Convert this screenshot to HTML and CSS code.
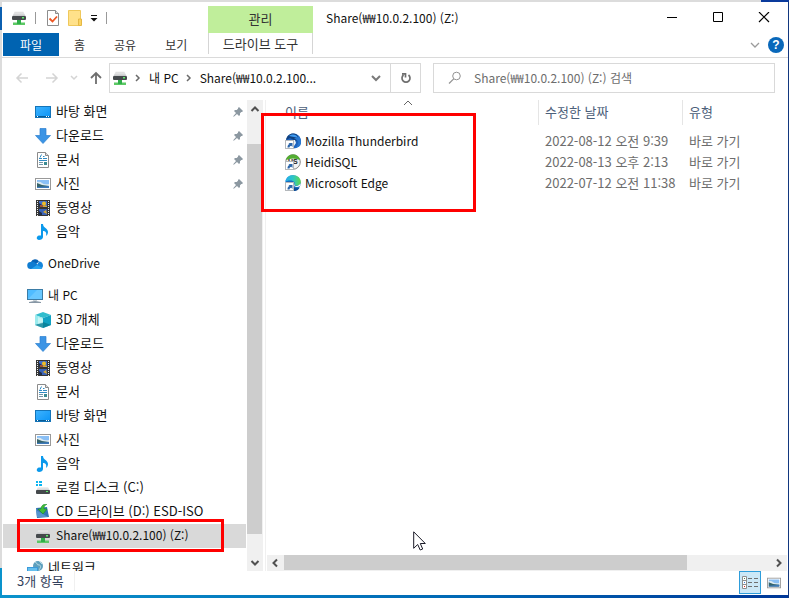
FILE: index.html
```html
<!DOCTYPE html>
<html lang="ko">
<head>
<meta charset="utf-8">
<title>Share(₩₩10.0.2.100) (Z:)</title>
<link rel="stylesheet" href="styles.css">
</head>
<body>
<svg class="sprite" aria-hidden="true">
  <defs>
    <linearGradient id="g-desk" x1="0" y1="0" x2="1" y2="1"><stop offset="0" stop-color="#3fb4ff"/><stop offset="1" stop-color="#0a93f5"/></linearGradient>
    <linearGradient id="g-drive" x1="0" y1="0" x2="0" y2="1"><stop offset="0" stop-color="#f2f2f2"/><stop offset="1" stop-color="#c4c6c8"/></linearGradient>
    <linearGradient id="g-edge" x1="0" y1="0" x2="1" y2="0"><stop offset="0" stop-color="#27a9ee"/><stop offset=".5" stop-color="#2cc6c4"/><stop offset="1" stop-color="#62d94b"/></linearGradient>
    <symbol id="netdrive" viewBox="0 0 16 16">
      <path d="M3.500 2h9l2 4h-13z" fill="url(#g-drive)"/>
      <path d="M3.500 2.200h9" stroke="#c9c9c9" stroke-width=".5"/>
      <rect x="1" y="6" width="14" height="4" rx="1" fill="#45494c"/>
      <rect x="11" y="7" width="2" height="1.500" fill="#5df06a"/>
      <path d="M6 10h4v2.500h4V15H2v-2.500h4z" fill="#5cc865"/>
      <path d="M6 10h4v4H6z" fill="#2fae49"/>
    </symbol>
    <symbol id="desktop" viewBox="0 0 16 16">
      <rect x=".5" y="2.500" width="15" height="11" fill="url(#g-desk)" stroke="#1474b8"/>
      <path d="M1 12h14v1H1z" fill="#075b96"/><path d="M2 12h1v1H2zM11 12h1v1h-1zM13 12h1v1h-1z" fill="#fff"/>
    </symbol>
    <symbol id="download" viewBox="0 0 16 16"><path d="M5 .5h6v7h4.500L8 15.500.5 7.500H5z" fill="#3b94e5" stroke="#2d7fd0" stroke-width=".7"/></symbol>
    <symbol id="document" viewBox="0 0 16 16">
      <path d="M2.500.5h8l3 3v12h-11z" fill="#fff" stroke="#8b8b8b"/><path d="M10.500.5v3h3" fill="#ddd" stroke="#8b8b8b"/>
      <path d="M5 5.500l1.500-3M4 6.500h3M8 4.500h1.500M4 8.500h8M8 6.500h4" stroke="#318bc3"/>
      <path d="M4 10.500h4M4 12.500h4" stroke="#7396a9"/><rect x="9" y="10" width="3" height="3" fill="#3c8b91"/>
    </symbol>
    <symbol id="picture" viewBox="0 0 16 16">
      <rect x=".5" y="2.500" width="15" height="11" fill="#fff" stroke="#999"/>
      <rect x="2" y="4" width="12" height="8" fill="#8abff5"/><path d="M2 6q3-1 5 1t7 1v2H2z" fill="#dceaf1"/><path d="M2 7l5 2 7 1v2H2z" fill="#35636b"/><path d="M2 11l12-1v2H2z" fill="#3d79ba"/>
    </symbol>
    <symbol id="video" viewBox="0 0 16 16">
      <rect x="1" y="0" width="14" height="16" fill="#353535"/>
      <path d="M2.500 1v15M13.500 1v15" stroke="#eee" stroke-dasharray="1 1"/>
      <rect x="4" y="1" width="8" height="6" fill="#426dc7"/><rect x="4" y="9" width="8" height="6" fill="#3a63b8"/>
      <path d="M4 3l3 2v2H4zM4 11l3 2v2H4z" fill="#1f2e4c"/><circle cx="9" cy="3.500" r="2" fill="#efbd24"/><path d="M7 7l2-2 3 1v1zM8 12l3-2 1 4z" fill="#d7a832"/><path d="M5 5h3v2H5z" fill="#9f5139"/>
    </symbol>
    <symbol id="music" viewBox="0 0 16 16"><path d="M6 0h2c0 4 5 4 5 8 0 2-1 3-2 4 1-4-1-5-3-5v6c0 2-2 3-4 3-3 0-3-4 0-4.500q1-.2 2 0z" fill="#0b99ec"/></symbol>
    <symbol id="cloud" viewBox="0 0 16 16">
      <path d="M4 6a4.500 4.500 0 0 1 8-.5L8 9z" fill="#0862b4"/><path d="M4 13a3.500 3.500 0 0 1-.5-7c2-.5 4 0 5 1L15 12q-1 1-2 1z" fill="#0f7cd1"/><path d="M5 13l5-4 2-3.500c3 0 4 2.500 4 4s-1 3.500-3 3.500z" fill="#1686dc"/><path d="M4 13l6-4 5.500 3q-1 1-2.500 1z" fill="#2aa4ed"/>
    </symbol>
    <symbol id="pc" viewBox="0 0 16 16">
      <rect x=".5" y="1.500" width="15" height="10" fill="#4fbcff" stroke="#3b7ca6"/><path d="M1 11L10 2h5v9z" fill="#7bd0ff" opacity=".6"/><path d="M6 12h4v1H6z" fill="#cad2d6"/><path d="M2 14.500q6-2 12 0z" stroke="#8797a5" fill="#b9c5cf"/>
    </symbol>
    <symbol id="cube" viewBox="0 0 16 16">
      <path d="M8 0l8 3-8 3-8-3z" fill="#31bdcd"/><path d="M0 3l8 3v10l-8-3z" fill="#9aebee"/><path d="M16 3L8 6v10l8-3z" fill="#12a2c3"/><path d="M0 13l8-3 8 3-8 3z" fill="#087a90" opacity=".75"/><path d="M3 5l5 2v4l-5 1z" fill="#daf9f7" opacity=".7"/>
    </symbol>
    <symbol id="disk" viewBox="0 0 16 16">
      <path d="M1 1h2v2H1zM4 1h3v2H4zM1 4h2v2H1zM4 4h3v2H4z" fill="#0ab5f1"/>
      <path d="M3 7h10l2 4H1z" fill="url(#g-drive)"/><rect x="1" y="10" width="14" height="4" rx="1" fill="#45494c"/><rect x="11" y="11" width="2" height="1" fill="#5df06a"/>
    </symbol>
    <symbol id="cd" viewBox="0 0 16 16">
      <path d="M1 4l11-1 2 10-12 1z" fill="#3475b5"/><path d="M1 6l12 7H2z" fill="#5795ce"/>
      <path d="M12 0C7 0 6 3 6 5H3l5 5 4-5H9c0-2 0-3 3-5z" fill="#40bd39" stroke="#168c28" stroke-width=".6"/>
    </symbol>
    <symbol id="network" viewBox="0 0 16 16">
      <circle cx="11" cy="6" r="5" fill="#5d9fbd"/><path d="M8 2c3 1 1 3 4 3s1 4 0 5M12 1l3 3" stroke="#b7dbe5" fill="none"/><path d="M0 7h11v7H0z" fill="#3c9ad9"/><path d="M1 8h9v5H1z" fill="#65bfee"/>
    </symbol>
    <symbol id="pin" viewBox="0 0 10 10"><path d="M6 0l4 4-1 1h-.7L7 6.300V8L6 9 4 7 .8 9.800.2 9.200 3 6 1 4l1-1h1.700L5 1.700V1z" fill="#8c98a1"/></symbol>
    <symbol id="shortcut" viewBox="0 0 16 16"><rect x=".5" y="7.500" width="8" height="8" fill="#fff" stroke="#b4b8bc"/><path d="M2.500 14.500c0-2 .5-3 2-3.500L3.500 10H7.500v4l-1.200-1.200c-1 0-1.600.7-1.800 1.700z" fill="#2c66aa"/></symbol>
    <symbol id="thunderbird" viewBox="0 0 16 16">
      <circle cx="8.500" cy="8" r="7.500" fill="#1c62bd"/><path d="M1 7C2 1 8-1 12 2c2 2 1 5-1 6L5 5z" fill="#10417f"/><path d="M4 3c4-3 8-1 9 2l-4-1z" fill="#3e9af1"/><path d="M5 7l5 0 1 3-2 3H5z" fill="#e9f3fb"/><path d="M9 5l4 3c1 3-1 5-3 7 5 0 7-4 6-8l-2-4-2 2z" fill="#2877d0"/>
      <use href="#shortcut"/>
    </symbol>
    <symbol id="heidi" viewBox="0 0 16 16">
      <circle cx="8" cy="8" r="7.300" fill="#f3f3f3" stroke="#888"/><path d="M1 6C2 2 5 .6 8 .6S14 2 15 6q-7-3-14 0z" fill="#53ad32"/><text x="3" y="10" class="monogram">HS</text>
      <use href="#shortcut"/>
    </symbol>
    <symbol id="edge" viewBox="0 0 16 16">
      <circle cx="8" cy="8" r="7.700" fill="#156bc0"/><path d="M.3 7C1 2 4 .2 8 .2c5 0 8 3.300 7.800 7C15.500 11 11 11.500 9.500 10c1-2-.5-4.500-4-4.500C3 5.500 1 6 .3 7z" fill="url(#g-edge)"/><path d="M6 7c-1 4 2 7 8 6l1-1c-2 5-8 5-11 1-1-3 0-5 2-6z" fill="#0b4b96"/><path d="M8 7c2 1 1 3 1.500 3.500S13 12 15.500 8.500L15 11q-3 2-6 0-2-2-1-4z" fill="#fff"/>
      <use href="#shortcut"/>
    </symbol>
  </defs>
</svg>

<div class="window">
  <header class="titlebar">
    <div class="title-left">
      <div class="quick">
        <svg class="icon"><use href="#netdrive"/></svg>
        <span class="divider"></span>
        <button class="plain" aria-label="속성"><svg width="14" height="16" viewBox="0 0 14 16"><path d="M1.500.5h8l3 3v12h-11z" fill="#fff" stroke="#8d8d8d"/><path d="M9.500.5v3h3" fill="#ddd" stroke="#8d8d8d"/><path d="M3.500 8.500l3 3 4.500-5" fill="none" stroke="#ee5623" stroke-width="1.800"/></svg></button>
        <button class="plain" aria-label="새 폴더"><svg width="14" height="16" viewBox="0 0 14 16"><path d="M.5.5h12v15H.5z" fill="#ffe18a" stroke="#efc85b"/><path d="M10.500 9h3v6.500h-3z" fill="#fbd462" stroke="#e5b846"/></svg></button>
        <button class="plain" aria-label="사용자 지정"><svg width="8" height="8" viewBox="0 0 8 8"><path d="M1 1h6v1H1zM.5 4h7L4 7.500z" fill="#111"/></svg></button>
        <span class="divider"></span>
      </div>
      <nav class="tabs">
        <button class="tab file">파일</button><button class="tab">홈</button><button class="tab">공유</button><button class="tab">보기</button>
      </nav>
    </div>
    <div class="context">
      <div class="context-name">관리</div>
      <button class="context-tab">드라이브 도구</button>
    </div>
    <div class="title-right">
      <div class="caption">
        <h1>Share(₩₩10.0.2.100) (Z:)</h1>
        <button class="control" aria-label="최소화"><svg width="12" height="12" viewBox="0 0 12 12"><path d="M1 5.500h10" stroke="#000"/></svg></button>
        <button class="control" aria-label="최대화"><svg width="12" height="12" viewBox="0 0 12 12"><path d="M1.500.5h9v9h-9z" fill="none" stroke="#000"/></svg></button>
        <button class="control" aria-label="닫기"><svg width="12" height="12" viewBox="0 0 12 12"><path d="M1 0l10 10M11 0L1 10" stroke="#000" stroke-width="1.200"/></svg></button>
      </div>
      <div class="ribbon-end">
        <button class="plain" aria-label="리본 확장"><svg width="10" height="6" viewBox="0 0 10 6"><path d="M1 1l4 4 4-4" fill="none" stroke="#9b9b9b" stroke-width="1.300"/></svg></button>
        <button class="help" aria-label="도움말">?</button>
      </div>
    </div>
  </header>

  <div class="toolbar">
    <div class="history">
      <button class="plain" aria-label="뒤로"><svg width="14" height="12" viewBox="0 0 14 12"><path d="M13 6H2M6.500 1.500L2 6l4.500 4.500" fill="none" stroke="#d4d4d4" stroke-width="1.500"/></svg></button>
      <button class="plain forward" aria-label="앞으로"><svg width="14" height="12" viewBox="0 0 14 12"><path d="M1 6h11M7.500 1.500L12 6l-4.500 4.500" fill="none" stroke="#d4d4d4" stroke-width="1.500"/></svg></button>
      <button class="plain recent" aria-label="최근 위치"><svg width="8" height="6" viewBox="0 0 8 6"><path d="M1 1l3 3 3-3" fill="none" stroke="#d4d4d4" stroke-width="1.500"/></svg></button>
      <button class="plain" aria-label="위로"><svg width="12" height="14" viewBox="0 0 12 14"><path d="M6 13V2M1 7l5-5 5 5" fill="none" stroke="#6e6e6e" stroke-width="1.800"/></svg></button>
    </div>
    <div class="address">
      <svg class="icon"><use href="#netdrive"/></svg>
      <svg class="crumb" width="6" height="8" viewBox="0 0 6 8"><path d="M1 1l3 3-3 3" fill="none" stroke="#6b6b6b" stroke-width="1.500"/></svg>
      <a href="#pc">내 PC</a>
      <svg class="crumb" width="6" height="8" viewBox="0 0 6 8"><path d="M1 1l3 3-3 3" fill="none" stroke="#6b6b6b" stroke-width="1.500"/></svg>
      <a href="#share">Share(₩₩10.0.2.100...</a>
      <button class="plain address-drop" aria-label="이전 위치"><svg width="10" height="7" viewBox="0 0 10 7"><path d="M1 1l4 4 4-4" fill="none" stroke="#7a7a7a" stroke-width="2"/></svg></button>
      <button class="refresh" aria-label="새로 고침"><svg width="12" height="12" viewBox="0 0 12 12"><path d="M8.500 3a4 4 0 1 1-5 0M2 1.800h3.500v3.700" fill="none" stroke="#6e6e6e" stroke-width="1.700"/></svg></button>
    </div>
    <label class="search">
      <svg width="14" height="14" viewBox="0 0 14 14"><circle cx="8.500" cy="5" r="3.800" fill="none" stroke="#929292"/><path d="M5.700 7.800L1 12.500" stroke="#929292" stroke-width="1.200"/></svg>
      <input type="text" aria-label="검색" placeholder="Share(₩₩10.0.2.100) (Z:) 검색">
    </label>
  </div>

  <div class="body">
    <aside class="sidebar">
      <ul class="group">
        <li class="child"><svg class="icon"><use href="#desktop"/></svg>바탕 화면<svg class="pin"><use href="#pin"/></svg></li>
        <li class="child"><svg class="icon"><use href="#download"/></svg>다운로드<svg class="pin"><use href="#pin"/></svg></li>
        <li class="child"><svg class="icon"><use href="#document"/></svg>문서<svg class="pin"><use href="#pin"/></svg></li>
        <li class="child"><svg class="icon"><use href="#picture"/></svg>사진<svg class="pin"><use href="#pin"/></svg></li>
        <li class="child"><svg class="icon"><use href="#video"/></svg>동영상</li>
        <li class="child"><svg class="icon"><use href="#music"/></svg>음악</li>
      </ul>
      <ul class="group"><li class="latin"><svg class="icon"><use href="#cloud"/></svg>OneDrive</li></ul>
      <ul class="group">
        <li class="latin"><svg class="icon"><use href="#pc"/></svg>내 PC</li>
        <li class="child"><svg class="icon"><use href="#cube"/></svg>3D 개체</li>
        <li class="child"><svg class="icon"><use href="#download"/></svg>다운로드</li>
        <li class="child"><svg class="icon"><use href="#video"/></svg>동영상</li>
        <li class="child"><svg class="icon"><use href="#document"/></svg>문서</li>
        <li class="child"><svg class="icon"><use href="#desktop"/></svg>바탕 화면</li>
        <li class="child"><svg class="icon"><use href="#picture"/></svg>사진</li>
        <li class="child"><svg class="icon"><use href="#music"/></svg>음악</li>
        <li class="child"><svg class="icon"><use href="#disk"/></svg>로컬 디스크 (C:)</li>
        <li class="child"><svg class="icon"><use href="#cd"/></svg>CD 드라이브 (D:) ESD-ISO</li>
        <li class="child latin selected"><svg class="icon"><use href="#netdrive"/></svg>Share(₩₩10.0.2.100) (Z:)<span class="mark mark-drive"></span></li>
      </ul>
      <ul class="group"><li><svg class="icon"><use href="#network"/></svg>네트워크</li></ul>
    </aside>
    <div class="vscroll">
      <svg width="16" height="16" viewBox="0 0 16 16"><path d="M4.500 11L8 7.500l3.500 3.500" fill="none" stroke="#505050" stroke-width="2"/></svg>
      <div class="vtrack"><div class="vthumb"></div></div>
      <svg width="16" height="16" viewBox="0 0 16 16"><path d="M4.500 6L8 9.500 11.500 6" fill="none" stroke="#505050" stroke-width="2"/></svg>
    </div>
    <main class="files">
      <table>
        <colgroup><col class="col-name"><col class="col-date"><col></colgroup>
        <thead><tr>
          <th>이름<svg class="sort" width="10" height="6" viewBox="0 0 10 6"><path d="M1 5l4-4 4 4" fill="none" stroke="#666"/></svg></th>
          <th>수정한 날짜</th><th>유형</th>
        </tr></thead>
        <tbody>
          <tr><td><span class="file-name"><svg class="icon"><use href="#thunderbird"/></svg>Mozilla Thunderbird</span></td><td>2022-08-12 오전 9:39</td><td>바로 가기</td></tr>
          <tr><td><span class="file-name"><svg class="icon"><use href="#heidi"/></svg>HeidiSQL</span></td><td>2022-08-13 오후 2:13</td><td>바로 가기</td></tr>
          <tr><td><span class="file-name"><svg class="icon"><use href="#edge"/></svg>Microsoft Edge</span></td><td>2022-07-12 오전 11:38</td><td>바로 가기</td></tr>
        </tbody>
      </table>
      <span class="mark mark-files"></span>
      <div class="hscroll">
        <svg width="17" height="16" viewBox="0 0 17 16"><path d="M10 4.500L6.500 8l3.500 3.500" fill="none" stroke="#505050" stroke-width="2"/></svg>
        <div class="htrack"><div class="hthumb"></div></div>
        <svg width="17" height="16" viewBox="0 0 17 16"><path d="M7 4.500L10.500 8 7 11.500" fill="none" stroke="#505050" stroke-width="2"/></svg>
      </div>
      <svg class="pointer" width="13" height="20" viewBox="0 0 13 20"><path d="M.7.8v16.500l4-3.800 2.500 5.500 2.500-1-2.400-5.500h5z" fill="#fff" stroke="#1b1b28"/></svg>
    </main>
  </div>

  <footer class="status">
    <span class="count">3개 항목</span>
    <div class="views">
      <button class="view active" aria-label="자세히"><svg width="18" height="16" viewBox="0 0 18 16"><path d="M1.500 1.500h4v12h-4zM1.500 5.500h4M1.500 9.500h4" fill="#fff" stroke="#8e8e8e"/><path d="M3 3h1v1H3z" fill="#4f8350"/><path d="M3 7h1v1H3z" fill="#347fe0"/><path d="M3 11h1v1H3z" fill="#d22"/><path d="M7 3.500h4M13 3.500h4M7 7.500h4M13 7.500h4M7 11.500h4M13 11.500h4" stroke="#707070"/></svg></button>
      <button class="view" aria-label="큰 아이콘"><svg width="14" height="14"><use href="#picture"/></svg></button>
    </div>
  </footer>
</div>
</body>
</html>
```

FILE: styles.css
```css
* { box-sizing: border-box; }

body {
  margin: 0;
  height: 100vh;
  padding: 2px 1px 3px 2px;
  overflow: hidden;
  font: 13px/20px "Noto Sans CJK KR", sans-serif;
  color: #111;
  background:
    linear-gradient(#0b5fb0, #0b5fb0) 0 7px / 2px 23px no-repeat,
    linear-gradient(90deg, #dcdcdc 761px, #0a3a9c 761px) 0 0 / 100% 2px no-repeat,
    linear-gradient(#dcdcdc, #dcdcdc) 0 0 / 2px 568px no-repeat,
    linear-gradient(#12377f, #12377f) 100% 0 / 1px 100% no-repeat,
    linear-gradient(90deg, #0a93cc, #0067b4 60%, #003798);
}

button {
  font: inherit;
  color: inherit;
  border: 0;
  padding: 0;
  background: none;
}

svg { display: block; flex: none; }
.sprite { position: absolute; width: 0; height: 0; }
.icon { width: 16px; height: 16px; }
.monogram { font: bold 7px "Liberation Sans", sans-serif; fill: #222; }
.plain { display: flex; align-items: center; justify-content: center; }

.window {
  display: flex;
  flex-direction: column;
  height: 100%;
  background: #fff;
}

/* Title bar and ribbon tabs */
.titlebar {
  display: flex;
  height: 56px;
  border-bottom: 1px solid #dadada;
}
.title-left { width: 206px; padding-left: 1px; }
.quick {
  display: flex;
  align-items: center;
  gap: 8px;
  height: 31px;
  padding-left: 8px;
}
.quick .divider { width: 1px; height: 12px; background: #999; }
.quick .divider:nth-child(2) { margin-right: 2px; }
.tabs { display: flex; gap: 1px; }
.tab { height: 23px; padding: 0 14px; font-size: 12px; color: #333; }
.tab.file { width: 56px; color: #fff; background: #0063b1; }

.context { width: 105px; padding-top: 4px; text-align: center; color: #333; }
.context-name { height: 27px; line-height: 26px; background: #c0ee9b; }
.context-tab {
  width: 100%;
  height: 21px;
  border: solid #d5d5d5;
  border-width: 0 1px;
}

.title-right { flex: 1; }
.caption { display: flex; align-items: center; height: 31px; padding: 0 1px 0 13px; }
.caption h1 { flex: 1; margin: 0; font-size: 12px; font-weight: 400; }
.control { display: flex; align-items: center; justify-content: center; width: 46px; height: 30px; }
.ribbon-end {
  display: flex;
  align-items: center;
  justify-content: flex-end;
  gap: 8px;
  height: 24px;
  padding-right: 4px;
}
.help {
  width: 16px;
  height: 16px;
  border-radius: 50%;
  background: #0968ba;
  color: #fff;
  font: bold 12px/16px "Liberation Sans", sans-serif;
}

/* Navigation row */
.toolbar { display: flex; align-items: center; height: 42px; padding: 0 13px 2px; }
.history { display: flex; align-items: center; width: 87px; margin-right: 7px; }
.forward { margin-left: 16px; }
.recent { margin: 0 12px 0 11px; }
.address {
  display: flex;
  align-items: center;
  width: 312px;
  height: 30px;
  padding-left: 2px;
  margin-right: 12px;
  border: 1px solid #d9d9d9;
}
.address .crumb { margin: 0 8px 0 7px; }
.address a { color: #111; text-decoration: none; font-size: 12px; }
.address-drop { width: 28px; height: 28px; margin-left: auto; }
.refresh {
  display: flex;
  align-items: center;
  justify-content: center;
  width: 30px;
  height: 28px;
  border-left: 1px solid #d9d9d9;
}
.search {
  display: flex;
  align-items: center;
  flex: 1;
  gap: 12px;
  height: 30px;
  padding-left: 14px;
  border: 1px solid #d9d9d9;
}
.search input { flex: 1; min-width: 0; padding: 0; border: 0; outline: 0; font: inherit; font-size: 12px; }
.search input::placeholder { color: #6d6d6d; opacity: 1; }

/* Folder tree */
.body { display: flex; flex: 1; min-height: 0; }
.sidebar { width: 245px; overflow: hidden; padding: 0 1px; }
.group { margin: 0 0 8px; padding: 0; list-style: none; }
.group li {
  display: flex;
  align-items: center;
  gap: 5px;
  position: relative;
  height: 24px;
  padding: 0 3px 2px 24px;
}
.group li > svg { margin-top: 2px; }
.group .latin { font-size: 12px; }
.group .child { padding-left: 32px; }
.group .selected { background: #d9d9d9; }
.group .pin { width: 10px; height: 10px; margin-left: auto; }

.vscroll { display: flex; flex-direction: column; width: 16px; background: #f0f0f0; }
.vtrack { flex: 1; padding-top: 28px; }
.vthumb { width: 15px; height: 95%; background: #cdcdcd; }

/* File list */
.files {
  position: relative;
  display: flex;
  flex-direction: column;
  flex: 1;
  min-width: 0;
  margin-left: 2px;
  padding: 0 1px;
  border-left: 1px solid #f0f0f0;
}
table { width: 100%; table-layout: fixed; border-collapse: collapse; }
.col-name { width: 272px; }
.col-date { width: 144px; }
th {
  position: relative;
  height: 30px;
  padding: 2px 0 0 6px;
  vertical-align: top;
  text-align: left;
  font-weight: 400;
  color: #4c607a;
}
th:not(:last-child)::after {
  content: "";
  position: absolute;
  top: 0;
  right: 0;
  width: 1px;
  height: 25px;
  background: #e5e5e5;
}
td { height: 21px; padding: 0 0 0 6px; color: #6d6d6d; white-space: nowrap; }
th:first-child, td:first-child { padding-left: 18px; }
.sort { position: absolute; top: 0; left: 50%; }
.file-name { display: flex; align-items: center; gap: 4px; color: #111; font-size: 12px; }

.hscroll { display: flex; height: 16px; margin-top: auto; background: #f0f0f0; }
.htrack { flex: 1; }
.hthumb { width: 83%; height: 15px; background: #cdcdcd; }
.pointer { position: absolute; left: 147px; top: 431px; }

.mark { position: absolute; z-index: 2; border: 3px solid #f00; }
.mark-files { left: -5px; top: 13px; width: 215px; height: 99px; }
.mark-drive { left: 14px; top: -5px; width: 207px; height: 33px; }

/* Status bar */
.status { display: flex; justify-content: space-between; height: 24px; padding-left: 15px; color: #33415c; }
.count { height: 20px; padding-right: 10px; border-right: 1px solid #f0f0f0; }
.views { display: flex; gap: 2px; padding-right: 3px; }
.view { display: flex; align-items: center; justify-content: center; width: 22px; height: 23px; }
.view.active { border: 1px solid #2e9ddb; background: #cce8f7; }
```
